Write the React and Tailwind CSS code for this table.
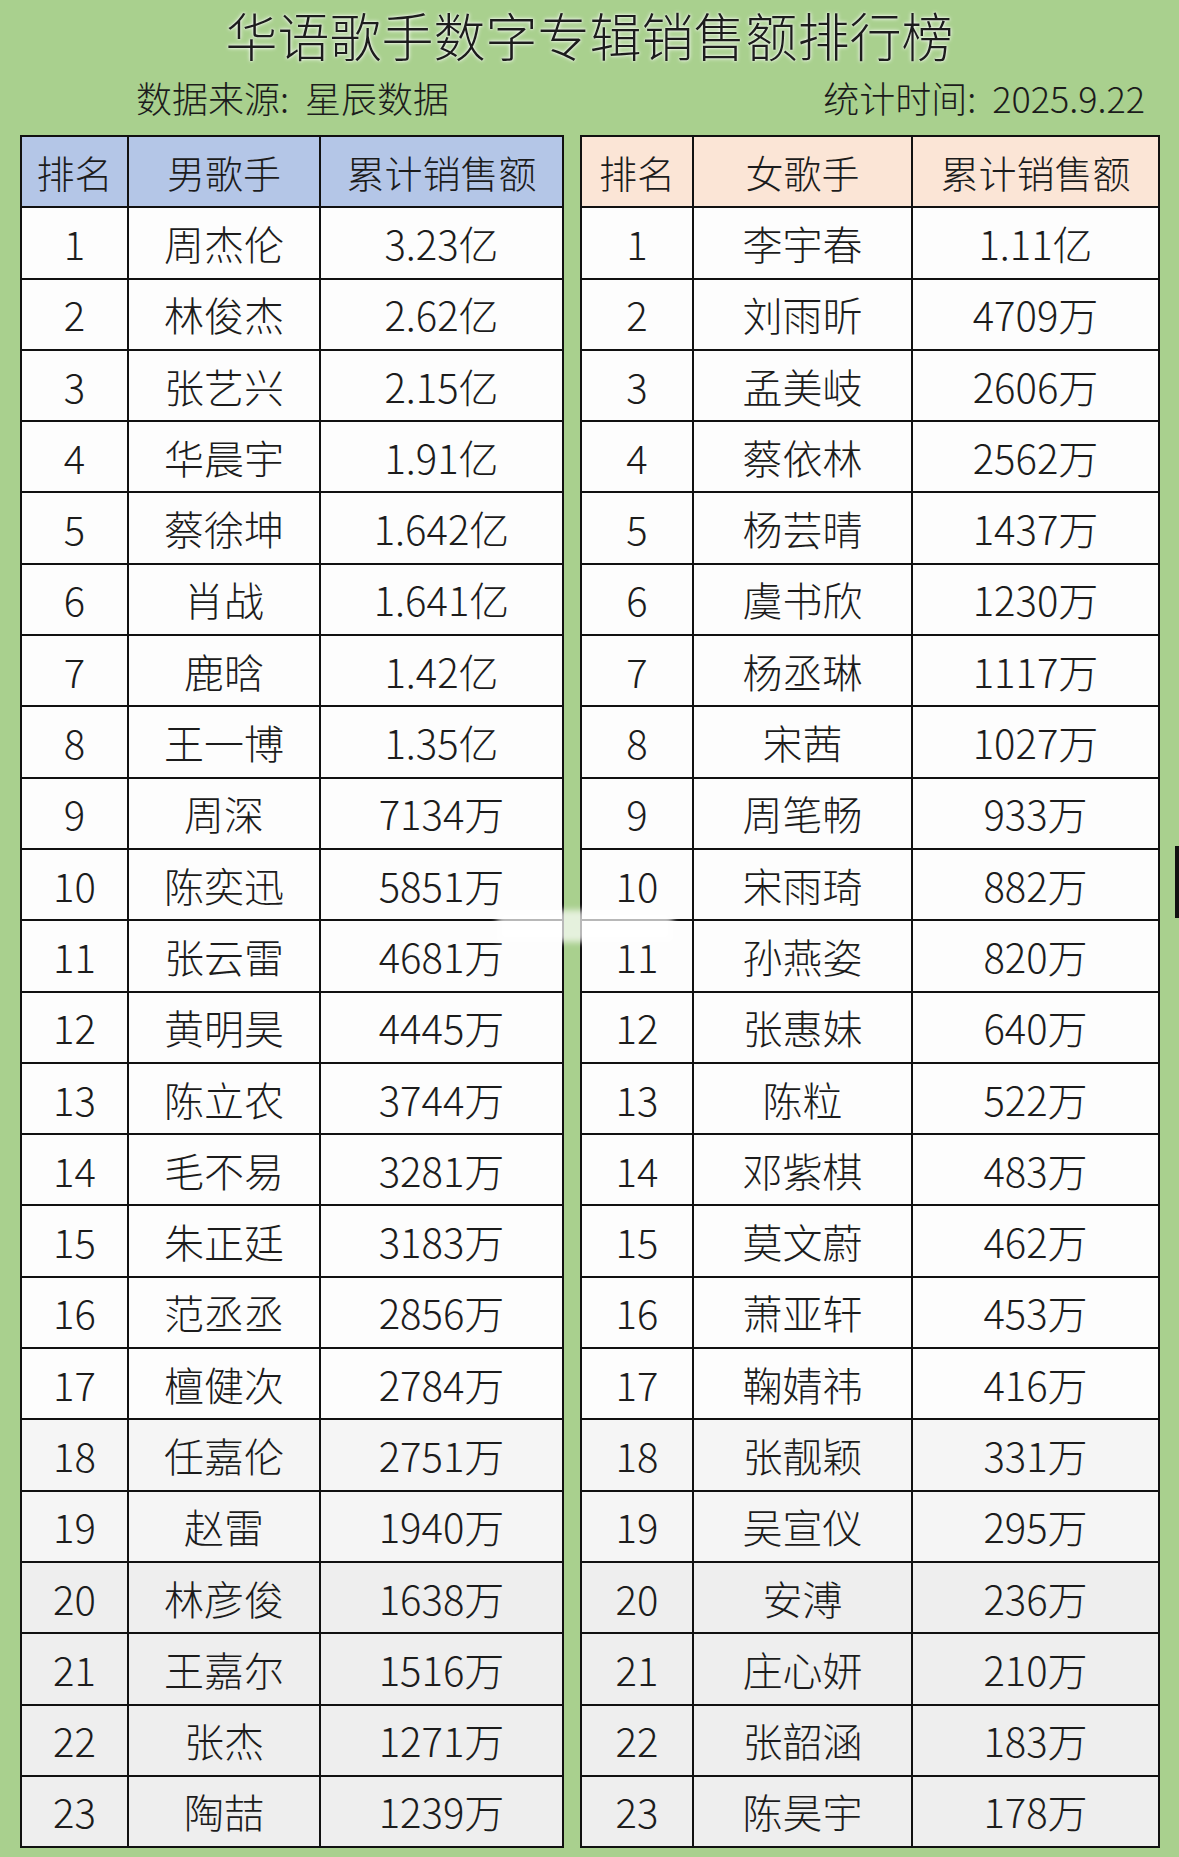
import React from "react";

const male = [
  ["周杰伦", "3.23亿"],
  ["林俊杰", "2.62亿"],
  ["张艺兴", "2.15亿"],
  ["华晨宇", "1.91亿"],
  ["蔡徐坤", "1.642亿"],
  ["肖战", "1.641亿"],
  ["鹿晗", "1.42亿"],
  ["王一博", "1.35亿"],
  ["周深", "7134万"],
  ["陈奕迅", "5851万"],
  ["张云雷", "4681万"],
  ["黄明昊", "4445万"],
  ["陈立农", "3744万"],
  ["毛不易", "3281万"],
  ["朱正廷", "3183万"],
  ["范丞丞", "2856万"],
  ["檀健次", "2784万"],
  ["任嘉伦", "2751万"],
  ["赵雷", "1940万"],
  ["林彦俊", "1638万"],
  ["王嘉尔", "1516万"],
  ["张杰", "1271万"],
  ["陶喆", "1239万"],
];

const female = [
  ["李宇春", "1.11亿"],
  ["刘雨昕", "4709万"],
  ["孟美岐", "2606万"],
  ["蔡依林", "2562万"],
  ["杨芸晴", "1437万"],
  ["虞书欣", "1230万"],
  ["杨丞琳", "1117万"],
  ["宋茜", "1027万"],
  ["周笔畅", "933万"],
  ["宋雨琦", "882万"],
  ["孙燕姿", "820万"],
  ["张惠妹", "640万"],
  ["陈粒", "522万"],
  ["邓紫棋", "483万"],
  ["莫文蔚", "462万"],
  ["萧亚轩", "453万"],
  ["鞠婧祎", "416万"],
  ["张靓颖", "331万"],
  ["吴宣仪", "295万"],
  ["安溥", "236万"],
  ["庄心妍", "210万"],
  ["张韶涵", "183万"],
  ["陈昊宇", "178万"],
];

// rows near the bottom of the photo look slightly grey
function rowBg(i) {
  if (i >= 19) return "bg-[#eeeeee]";
  if (i >= 17) return "bg-[#f5f5f5]";
  return "bg-[#fdfdfd]";
}

const cell = "flex items-center justify-center border-r-2 border-b-2 border-[#111]";

function RankTable({ cols, headBg, label, rows }) {
  return (
    <div className={`grid ${cols} auto-rows-[71.3px] border-l-2 border-t-2 border-[#111]`}>
      <div className={`${cell} ${headBg} text-[38px]`}>排名</div>
      <div className={`${cell} ${headBg} text-[38px]`}>{label}</div>
      <div className={`${cell} ${headBg} text-[38px]`}>累计销售额</div>
      {rows.map(([name, amount], i) => (
        <React.Fragment key={name}>
          <div className={`${cell} ${rowBg(i)}`}>{i + 1}</div>
          <div className={`${cell} ${rowBg(i)}`}>{name}</div>
          <div className={`${cell} ${rowBg(i)}`}>{amount}</div>
        </React.Fragment>
      ))}
    </div>
  );
}

export default function App() {
  return (
    <div className="relative w-[1179px] h-[1857px] overflow-hidden bg-[#a9d08e] text-[#1c1c1c] font-light font-['Noto_Sans_CJK_SC','Noto_Sans',sans-serif]">
      <div className="h-[68px] flex items-center justify-center">
        <h1 className="text-[52px] leading-tight [text-shadow:0_0_4px_#fff,0_0_2px_#fff]">
          华语歌手数字专辑销售额排行榜
        </h1>
      </div>
      <div className="h-[67px] flex items-start justify-between pl-[136px] pr-[34px] pt-[11px] text-[36px] leading-none">
        <span>数据来源:&nbsp;&nbsp;星辰数据</span>
        <span>统计时间:&nbsp;&nbsp;2025.9.22</span>
      </div>
      <div className="flex gap-[16px] pl-[20px] text-[40px] leading-none">
        <RankTable
          cols="grid-cols-[107px_192px_243px]"
          headBg="bg-[#b4c6e7]"
          label="男歌手"
          rows={male}
        />
        <RankTable
          cols="grid-cols-[112px_219px_247px]"
          headBg="bg-[#fbe5d6]"
          label="女歌手"
          rows={female}
        />
      </div>
      {/* viewer artefacts over the photo */}
      <div className="absolute left-[497px] top-[910px] w-[176px] h-[32px] bg-white/70 blur-[3px]" />
      <div className="absolute right-0 top-[846px] w-[4px] h-[72px] bg-[#111]" />
    </div>
  );
}
